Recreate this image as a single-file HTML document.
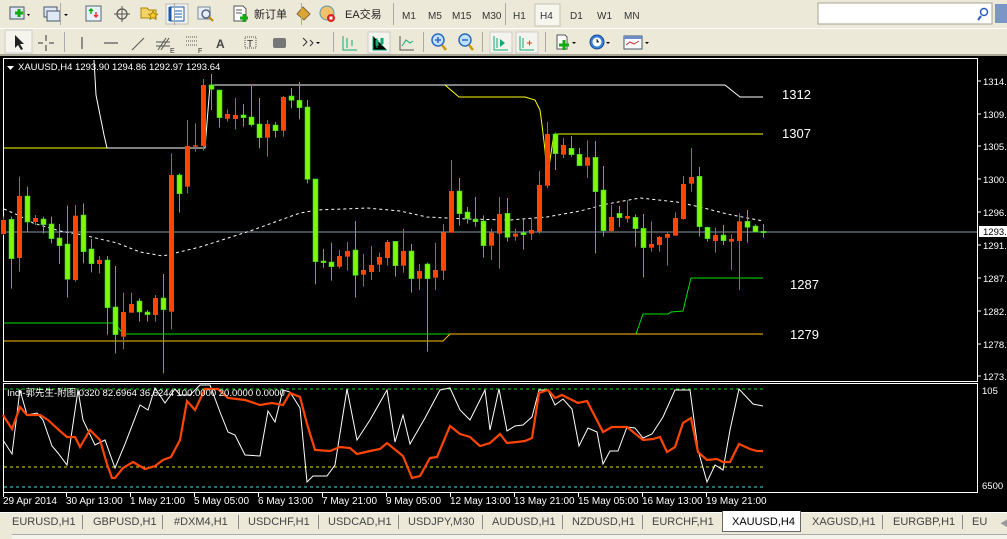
<!DOCTYPE html>
<html><head><meta charset="utf-8">
<style>
*{margin:0;padding:0;box-sizing:border-box}
body{width:1007px;height:539px;overflow:hidden;background:#ece9d8;font-family:"Liberation Sans","Noto Sans CJK SC",sans-serif;position:relative}
.tb{position:absolute;left:0;width:1007px;height:28px;background:#ece9d8}
.t{position:absolute;font-size:11px;color:#333;top:9px}
.ic{position:absolute}
.sep{position:absolute;width:1px;height:20px;background:#a9a797;border-right:1px solid #fff}
.tab{position:absolute;top:516px;font-size:11px;color:#444}
.tsep{position:absolute;top:515px;width:1px;height:14px;background:#888}
</style></head><body>
<div class="tb" style="top:0"></div>
<div class="tb" style="top:28px;border-top:1px solid #fff"></div>
<!-- row1 icons -->
<svg class="ic" style="left:0;top:0" width="1007" height="56">
<g fill="none">
<rect x="10" y="7" width="14" height="12" fill="#dfe8f4" stroke="#456"/><path d="M15 13h8M19 9v8" stroke="#1a1" stroke-width="3"/><path d="M27 14l3 0l-1.5 2z" fill="#000"/>
<rect x="44" y="7" width="13" height="10" fill="#dfe8f4" stroke="#456"/><rect x="47" y="11" width="13" height="10" fill="#dfe8f4" stroke="#456"/><path d="M64 14h4l-2 2z" fill="#000"/>
<rect x="86" y="6" width="15" height="15" fill="#e8f0fa" stroke="#567"/><path d="M91 9v5M89 11l2-2 2 2" stroke="#1a1" stroke-width="1.5"/><path d="M96 12v5M94 15l2 2 2-2" stroke="#e33" stroke-width="1.5"/>
<circle cx="122" cy="14" r="5" stroke="#555" stroke-width="1.3"/><path d="M122 6v16M114 14h16" stroke="#555"/>
<path d="M141 8h6l2 2h7v8h-15z" fill="#f4d36b" stroke="#a80"/><path d="M153 11l1.5 3 3 .3-2.3 2 .8 3-3-1.7-3 1.7.8-3-2.3-2 3-.3z" fill="#fc3" stroke="#a80"/>
<rect x="166" y="4" width="22" height="20" fill="#f4f3ec" stroke="#bbb"/><rect x="170" y="7" width="14" height="14" fill="#fff" stroke="#1a5ca8"/><path d="M170 7v14" stroke="#1a5ca8" stroke-width="3"/><path d="M175 11h7M175 14h7M175 17h7" stroke="#1a5ca8"/>
<rect x="198" y="7" width="12" height="12" fill="#e8eef8" stroke="#789"/><circle cx="206" cy="14" r="4" stroke="#568" stroke-width="1.5"/><path d="M209 17l4 4" stroke="#b80" stroke-width="2"/>
<path d="M234 6h9l3 3v12h-12z" fill="#fff" stroke="#555"/><path d="M236 10h6M236 13h6" stroke="#555"/><path d="M240 18h8M244 14v8" stroke="#1a1" stroke-width="3"/>
<path d="M297 14l6-7 7 7-6 6z" fill="#d9a531" stroke="#864"/>
<circle cx="327" cy="13" r="7" fill="#f0c36b" stroke="#59a"/><circle cx="331" cy="18" r="4" fill="#d22"/><rect x="329.5" y="16.5" width="3" height="3" fill="#fff"/>
</g>
<g font-size="11" fill="#222" font-family="Liberation Sans,Noto Sans CJK SC,sans-serif">
<text x="254" y="18">新订单</text><text x="272" y="18" display="none"></text>
<text x="345" y="18">EA交易</text>
</g>
<rect x="535" y="4" width="25" height="22" fill="#f6f5ee" stroke="#c5c2b0"/>
<g font-size="10" fill="#333" font-family="Liberation Sans,sans-serif">
<text x="402" y="19">M1</text><text x="428" y="19">M5</text><text x="452" y="19">M15</text><text x="482" y="19">M30</text><text x="513" y="19">H1</text><text x="540" y="19">H4</text><text x="570" y="19">D1</text><text x="597" y="19">W1</text><text x="624" y="19">MN</text>
</g>
<rect x="60" y="3" width="1" height="22" fill="#aaa"/><rect x="174" y="3" width="1" height="22" fill="#aaa"/><rect x="301" y="3" width="1" height="22" fill="#aaa"/><rect x="393" y="3" width="1" height="22" fill="#aaa"/><rect x="505" y="3" width="1" height="22" fill="#aaa"/>
<rect x="818" y="3" width="174" height="21" fill="#fff" stroke="#a7a290"/><circle cx="984" cy="12" r="3.5" stroke="#2a5cc0" stroke-width="1.5" fill="none"/><path d="M981 16l-3 4" stroke="#2a5cc0" stroke-width="2"/>
<rect x="995" y="4" width="12" height="19" fill="#7a96c8"/>
<!-- row2 -->
<rect x="5" y="30" width="27" height="23" fill="#f4f3ec" stroke="#ccc"/>
<path d="M15 35v13l3-3 3 5 2-1-3-5h4z" fill="#222"/>
<path d="M46 35v6M46 45v6M38 43h5M49 43h5" stroke="#333"/>
<path d="M82 37v12" stroke="#333"/><path d="M104 43h14" stroke="#333"/><path d="M132 50l12-12" stroke="#555"/>
<path d="M158 50l8-12M161 50l8-12M156 42h14M156 46h14" stroke="#555"/><text x="170" y="53" font-size="7" fill="#333">E</text>
<path d="M186 37h12M186 41h12M186 45h12" stroke="#555" stroke-dasharray="1,1"/><text x="198" y="53" font-size="7" fill="#333">F</text>
<text x="216" y="48" font-size="12" fill="#444" font-weight="bold">A</text>
<rect x="245" y="37" width="11" height="11" fill="none" stroke="#555" stroke-dasharray="1,1"/><text x="247" y="47" font-size="10" fill="#333">T</text>
<rect x="273" y="38" width="13" height="10" rx="2" fill="#777"/>
<path d="M303 38l4 4-4 4M310 40l3 3-3 3" stroke="#333" fill="none"/><path d="M316 42h4l-2 2z" fill="#000"/>
<path d="M343 36v14h14M347 38v10M352 40v6" stroke="#1a7" fill="none"/>
<rect x="368" y="32" width="22" height="21" fill="#f4f3ec" stroke="#ccc"/><path d="M373 36v14h14M377 38v10M382 40v6" stroke="#1a7"/><rect x="375.5" y="40" width="3" height="6" fill="#1a7"/><rect x="380.5" y="38" width="3" height="6" fill="#1a7"/>
<path d="M400 36v14h14" stroke="#555" fill="none"/><path d="M402 46l4-6 4 3 3-2" stroke="#1a7" fill="none"/>
<circle cx="438" cy="40" r="6" fill="#bfe0ff" stroke="#2a6ac0" stroke-width="1.5"/><path d="M435 40h6M438 37v6" stroke="#2a6ac0" stroke-width="1.5"/><path d="M442 45l4 5" stroke="#c90" stroke-width="2.5"/>
<circle cx="465" cy="40" r="6" fill="#bfe0ff" stroke="#2a6ac0" stroke-width="1.5"/><path d="M462 40h6" stroke="#2a6ac0" stroke-width="1.5"/><path d="M469 45l4 5" stroke="#c90" stroke-width="2.5"/>
<rect x="490" y="32" width="22" height="21" fill="#f4f3ec" stroke="#ccc"/><path d="M494 36v14h14M497 38v10" stroke="#1a7" fill="none"/><path d="M500 39l5 4-5 4z" fill="#1a7"/>
<rect x="516" y="32" width="22" height="21" fill="#f4f3ec" stroke="#ccc"/><path d="M520 36v14h14M523 38v10" stroke="#1a7" fill="none"/><path d="M527 43h5M529.5 40.5v5" stroke="#e33"/>
<path d="M557 35h8l2 2v12h-10z" fill="#fff" stroke="#555"/><path d="M559 45h10M564 40v10" stroke="#1a1" stroke-width="3"/><path d="M572 42h4l-2 2z" fill="#000"/>
<circle cx="597" cy="42" r="7" fill="#3a7fd8" stroke="#1a4a90"/><circle cx="597" cy="42" r="4.5" fill="#fff"/><path d="M597 39v3h2" stroke="#333"/><path d="M606 42h4l-2 2z" fill="#000"/>
<rect x="624" y="36" width="18" height="13" fill="#fff" stroke="#456"/><path d="M624 36h18v3h-18z" fill="#6a8cc8"/><path d="M626 45l4-3 4 2 5-3" stroke="#c33" fill="none"/><path d="M645 42h4l-2 2z" fill="#000"/>
<rect x="64" y="32" width="1" height="20" fill="#aaa"/><rect x="333" y="32" width="1" height="20" fill="#aaa"/><rect x="423" y="32" width="1" height="20" fill="#aaa"/><rect x="482" y="32" width="1" height="20" fill="#aaa"/><rect x="545" y="32" width="1" height="20" fill="#aaa"/>
<rect x="0" y="54" width="1007" height="2" fill="#a9a797"/>
</svg>

<svg id="ch" style="position:absolute;left:0;top:56px" width="1007" height="456" viewBox="0 56 1007 456">
<rect x="0" y="56" width="1007" height="456" fill="#000"/>
<rect x="3.5" y="58.5" width="974" height="323" fill="none" stroke="#fff"/>
<rect x="3.5" y="383.5" width="974" height="109" fill="none" stroke="#fff"/>
<line x1="4" y1="232" x2="977" y2="232" stroke="#8899aa"/>
<g id="lines" fill="none"></g>
<g id="cand"></g>
<g font-size="13" fill="#fff" font-family="Liberation Sans,sans-serif">
<text x="782" y="99">1312</text><text x="782" y="138">1307</text><text x="790" y="289">1287</text><text x="790" y="339">1279</text>
</g>
<path d="M7 66h7l-3.5 4z" fill="#fff"/>
<text x="18" y="70" font-size="9.5" fill="#fff" font-family="Liberation Sans,sans-serif">XAUUSD,H4  1293.90 1294.86 1292.97 1293.64</text>
<g font-size="9.5" fill="#fff" font-family="Liberation Sans,sans-serif" id="ax">
<text x="983" y="85">1314.4</text><text x="983" y="118">1309.9</text><text x="983" y="150">1305.4</text><text x="983" y="183">1300.8</text><text x="983" y="216">1296.3</text>
<rect x="979" y="226" width="28" height="11" fill="#fff"/><text x="983" y="235" fill="#000">1293.6</text>
<text x="983" y="249">1291.8</text><text x="983" y="282">1287.3</text><text x="983" y="315">1282.7</text><text x="983" y="348">1278.2</text><text x="983" y="380">1273.6</text>
<text x="982" y="394">105</text><text x="982" y="489">6500</text>
</g>
<line x1="4" y1="389" x2="763" y2="389" stroke="#00dd00" stroke-dasharray="3,3"/>
<line x1="4" y1="467" x2="763" y2="467" stroke="#e8e800" stroke-dasharray="3,3"/>
<line x1="4" y1="487" x2="763" y2="487" stroke="#40e0e0" stroke-dasharray="3,3"/>
<g id="ind" fill="none"></g>
<text x="7" y="396" font-size="9.5" fill="#fff" font-family="Liberation Sans,Noto Sans CJK SC,sans-serif">Indi-郭先生-附图 0320 82.6964 36.6244 100.0000 20.0000 0.0000</text>
<g font-size="10" fill="#fff" font-family="Liberation Sans,sans-serif">
<text x="3" y="504">29 Apr 2014</text><text x="66" y="504">30 Apr 13:00</text><text x="130" y="504">1 May 21:00</text><text x="194" y="504">5 May 05:00</text><text x="258" y="504">6 May 13:00</text><text x="322" y="504">7 May 21:00</text><text x="386" y="504">9 May 05:00</text><text x="450" y="504">12 May 13:00</text><text x="514" y="504">13 May 21:00</text><text x="578" y="504">15 May 05:00</text><text x="642" y="504">16 May 13:00</text><text x="706" y="504">19 May 21:00</text>
</g>
</svg>
<div style="position:absolute;left:0;top:512px;width:1007px;height:27px;background:#ece9d8;border-top:1px solid #fff"></div>
<div style="position:absolute;left:722px;top:511px;width:79px;height:21px;background:#fff;border:1px solid #666;border-top:none"></div>
<div class="tab" style="left:12px">EURUSD,H1</div><div class="tsep" style="left:82px"></div>
<div class="tab" style="left:93px">GBPUSD,H1</div><div class="tsep" style="left:162px"></div>
<div class="tab" style="left:174px">#DXM4,H1</div><div class="tsep" style="left:238px"></div>
<div class="tab" style="left:248px">USDCHF,H1</div><div class="tsep" style="left:318px"></div>
<div class="tab" style="left:328px">USDCAD,H1</div><div class="tsep" style="left:398px"></div>
<div class="tab" style="left:408px">USDJPY,M30</div><div class="tsep" style="left:482px"></div>
<div class="tab" style="left:492px">AUDUSD,H1</div><div class="tsep" style="left:562px"></div>
<div class="tab" style="left:572px">NZDUSD,H1</div><div class="tsep" style="left:642px"></div>
<div class="tab" style="left:652px">EURCHF,H1</div>
<div class="tab" style="left:732px;color:#000">XAUUSD,H4</div>
<div class="tab" style="left:812px">XAGUSD,H1</div><div class="tsep" style="left:882px"></div>
<div class="tab" style="left:893px">EURGBP,H1</div><div class="tsep" style="left:962px"></div>
<div class="tab" style="left:972px">EU</div><div class="tab" style="left:1000px;color:#999;font-size:8px;top:518px">◀</div>
<div style="position:absolute;left:12px;top:534px;width:995px;height:5px;border-top:1px solid #aaa;background:#f4f3ec"></div>
<script>
var NS="http://www.w3.org/2000/svg";
function el(p,t,a){var e=document.createElementNS(NS,t);for(var k in a)e.setAttribute(k,a[k]);p.appendChild(e);return e;}
var D=[
["r",480,522,470,525],["g",478,596,470,686],["r",408,594,350,635],["g",408,486,380,515],["r",474,486,465,495],["g",477,494,470,520],["g",492,536,470,550],["g",534,557,492,612],["g",552,658,437,713],["r",467,660,435,665],
["g",465,575,430,610],["g",567,611,537,637],["r",600,612,588,640],["g",600,743,588,824],["g",741,824,618,880],["r",756,830,698,868],["r",732,758,698,758],["g",723,756,715,785],["g",756,764,750,785],["r",714,765,705,785],
["g",714,749,642,940],["r",345,755,280,808],["g",345,401,340,458],["r",258,380,180,400],["r",256,260,190,275],["r",75,258,57,272],["g",75,88,42,150],["g",90,173,90,203],["r",162,176,148,185],["r",165,177,114,208],
["g",165,173,132,200],["g",171,194,78,200],["g",192,233,114,265],["r",192,233,180,290],["g",195,212,186,233],["r",111,212,108,230],["g",108,121,84,145],["g",121,143,66,178],["g",141,358,120,370],["g",357,605,357,673],
["g",603,608,567,623],["g",606,620,548,662],["r",588,620,570,625],["r",573,590,546,632],["g",570,646,483,713],["r",630,644,582,680],["r",615,636,558,660],["r",591,614,578,636],["r",546,594,540,617],["g",544,617,544,650],
["r",573,617,507,638],["g",573,656,552,698],["r",633,656,612,690],["g",612,656,608,875],["r",630,653,548,690],["r",517,632,492,660],["r",393,518,300,518],["g",393,461,354,497],["g",456,476,441,491],["g",478,485,411,500],
["g",483,557,466,593],["r",518,557,507,600],["r",462,521,411,626],["g",460,532,414,545],["r",521,530,507,542],["g",518,524,478,569],["r",510,521,475,540],["r",375,514,333,521],["r",222,377,186,384],["g",222,281,218,330],
["r",255,284,234,294],["g",265,284,228,290],["g",283,317,264,317],["r",292,317,241,354],["g",292,395,243,581],["g",390,512,318,530],["r",471,513,435,517],["g",460,473,438,501],["r",468,476,421,488],["g",472,506,463,560],
["g",505,563,462,653],["r",552,563,484,575],["r",531,555,528,575],["r",522,533,514,617],["r",474,527,457,527],["r",372,477,348,479],["r",351,371,264,395],["g",349,500,321,530],["g",502,536,500,545],["r",525,543,503,578],
["g",525,542,495,555],["r",537,545,523,630],["r",484,543,460,690],["g",484,502,450,548],["g",498,516,493,516],["g",514,518,492,533]];
var L=document.getElementById("lines"),C=document.getElementById("cand"),I=document.getElementById("ind");
function pl(p,pts,st,w,da){var a={points:pts,stroke:st,"stroke-width":w||1};if(da)a["stroke-dasharray"]=da;el(p,"polyline",a);}
pl(L,"94,60 96,95 100,115 104,135 107,148 205,148 210,85 725,85 735,93 740,97 763,97","#fff");
pl(L,"4,148 107,148","#ffff00");
pl(L,"445,85 459,97 525,97 535,100 540,110 542,125 545,150 547,180 550,160 553,140 555,134 763,134","#ffff00");
pl(L,"4,323 115,323 120,330 124,334 636,334 643,314 668,314 671,312 683,311 688,290 691,278 763,278","#00e000");
pl(L,"4,341 443,341 450,334 763,334","#ffc000");
pl(L,"4,209 20,216 33,223 60,231 83,235 117,243 140,252 163,256 200,247 250,231 300,213 317,210 367,208 400,211 427,217 467,219 510,220 547,217 580,211 607,204 640,198 677,202 700,207 727,214 763,221","#fff",1,"3,3");
D.forEach(function(d,i){var x=Math.round(3.3+8*i);var y=function(z){return 60+z/3;};
var g=d[0]=="g",col=g?"#32cd32":"#ff4500";
el(C,"line",{x1:x+.5,x2:x+.5,y1:y(d[3]),y2:y(d[4]),stroke:col});
var h=Math.max(1,y(d[2])-y(d[1]));
if(g)el(C,"rect",{x:x-2,y:y(d[1]),width:5,height:h,fill:"#7cfc00",stroke:"#32cd32","stroke-width":.6});
else el(C,"rect",{x:x-2,y:y(d[1]),width:5,height:h,fill:"#ff4500"});
});
pl(I,"3,440 12,454 20,390 27,415 37,413 43,420 52,446 58,453 67,465 78,390 83,420 95,445 105,440 115,468 125,444 140,405 148,410 155,388 165,403 175,389 180,395 190,395 200,385 210,385 220,412 228,432 235,435 245,455 260,456 268,411 275,422 283,390 290,392 300,408 307,482 313,476 327,476 335,465 347,389 357,440 370,420 387,390 395,442 403,415 410,444 425,418 440,390 450,388 460,410 470,420 485,390 490,430 499,389 507,431 515,426 523,425 532,417 539,390 548,390 555,405 563,399 572,409 579,446 588,428 597,432 603,464 610,451 618,451 627,427 635,428 643,438 652,434 663,417 675,390 690,390 698,450 707,482 715,465 723,470 730,430 739,389 753,404 763,406","#fff");
pl(I,"3,415 12,429 20,407 27,415 40,415 48,420 60,431 67,437 75,437 80,447 90,430 100,440 107,464 112,478 115,478 123,468 133,462 145,469 155,466 163,460 171,457 180,440 187,401 195,410 205,389 218,389 228,398 245,400 260,405 272,403 283,405 290,393 300,397 307,424 315,450 330,451 340,447 350,448 357,454 370,451 380,449 387,443 403,456 412,478 420,476 430,458 437,457 450,426 460,434 470,437 480,446 490,443 500,434 507,443 517,442 525,441 532,438 539,393 548,390 555,398 562,395 578,403 587,401 603,432 612,427 627,427 643,440 653,439 660,437 667,452 675,447 683,423 691,418 698,452 707,460 717,459 723,462 730,462 739,444 750,449 757,451 763,451","#ff4500",2.2);
var ax=document.getElementById("ch");
[81,114,146,179,212,245,278,311,344,376].forEach(function(y){el(ax,"line",{x1:978,x2:981,y1:y,y2:y,stroke:"#fff"});});
[3,66,130,194,258,322,386,450,514,578,642,706].forEach(function(x){el(ax,"line",{x1:x+.5,x2:x+.5,y1:493,y2:497,stroke:"#fff"});});
</script>
</body></html>
